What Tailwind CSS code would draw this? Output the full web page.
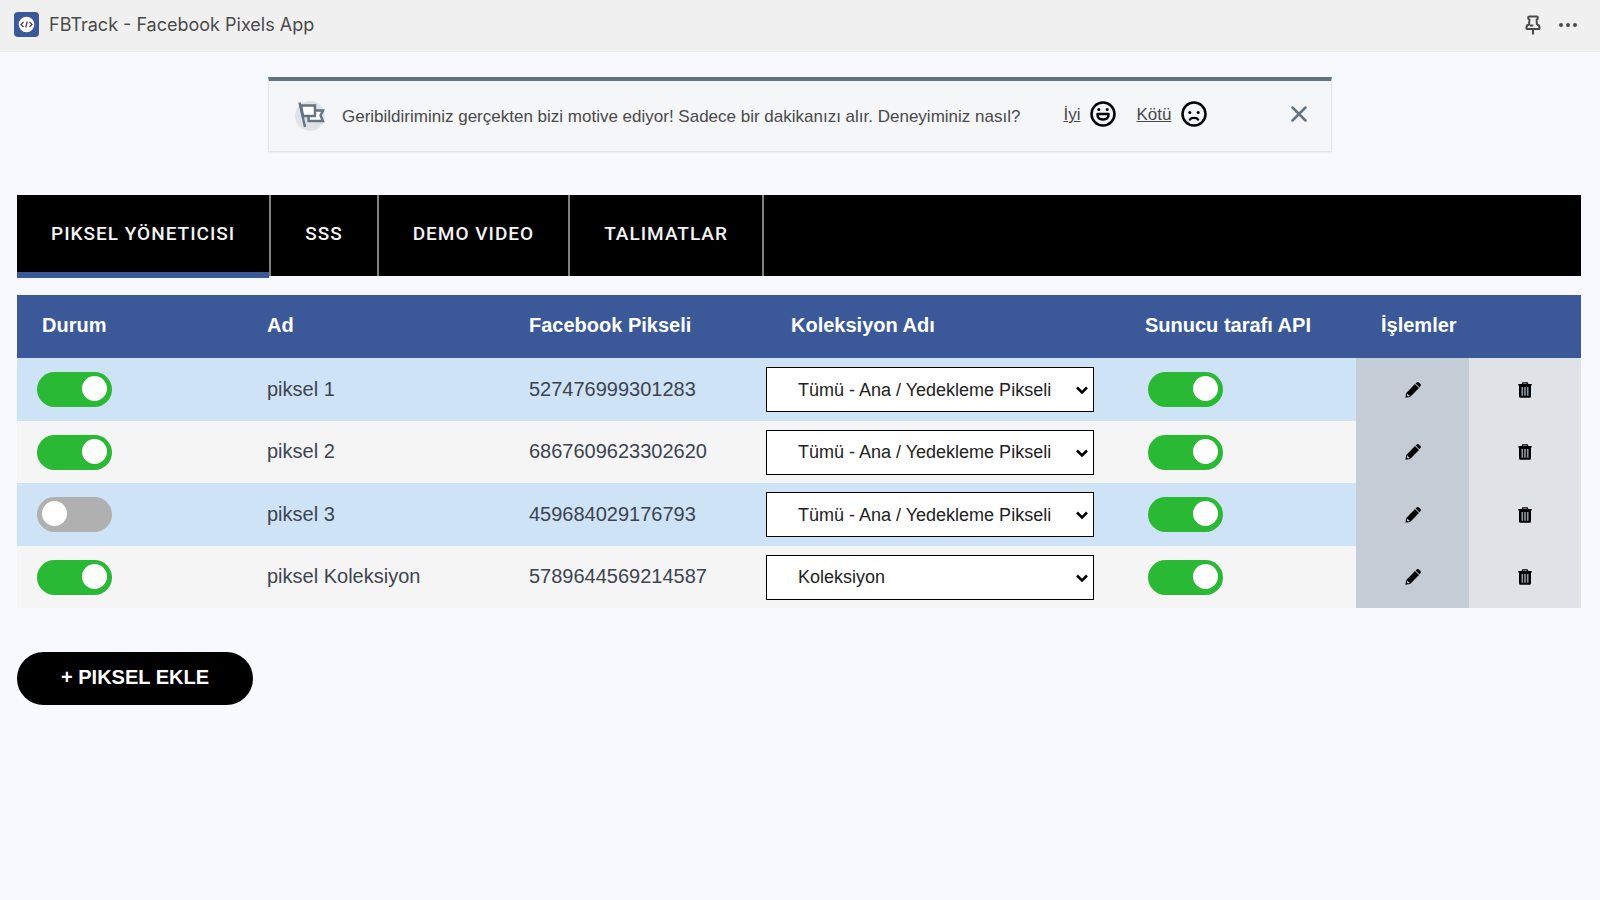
<!DOCTYPE html>
<html lang="tr">
<head>
<meta charset="utf-8">
<meta name="viewport" content="width=device-width, initial-scale=1">
<title>FBTrack - Facebook Pixels App</title>
<script src="https://cdn.jsdelivr.net/npm/@tailwindcss/browser@4"></script>
</head>
<body class="min-h-screen bg-[#f8f9ff] font-['Liberation_Sans',Arial,sans-serif] text-[#303030]">
<svg class="hidden" aria-hidden="true">
  <symbol id="pencil" viewBox="0 0 16 16"><path fill="currentColor" fill-rule="evenodd" d="M10.600 1.400 11.700.5a1.600 1.600 0 0 1 2.200 0l1.500 1.500a1.600 1.600 0 0 1 0 2.200l-1.100 1.100zM9.900 1.900l4.100 4.100-8.900 8.900-4.700.9.900-4.900zM2.300 11.800 1.900 13.400l1 1 1.500-.4v-1.100H3.200v-1.100z"/></symbol>
  <symbol id="trash" viewBox="0 0 14 16"><path fill="currentColor" fill-rule="evenodd" d="M3.800 2V1.400Q3.800.3 4.900.3h4.200q1.100 0 1.100 1.100V2h3.500v1.600H13v10.600q0 1.500-1.500 1.500h-9Q1 15.700 1 14.200V3.600H.3V2zm1.400 0h3.600v-.5H5.200z"/><path fill="#8d9aa5" d="M3.500 5h1.600v8.700H3.500zM6.200 5h1.600v8.700H6.200zM8.900 5h1.600v8.700H8.900z"/></symbol>
</svg>

<header class="flex h-[52px] items-center justify-between border-b border-[#ebebeb] bg-[#f0f0f0] pr-[22px] pl-3.5 pb-0.5">
  <div class="flex items-center gap-2.5">
    <svg class="size-[25px]" viewBox="0 0 25 25" aria-hidden="true"><rect width="25" height="25" rx="4" fill="#3b5998"/><circle cx="12.500" cy="12.500" r="7.800" fill="#fff"/><path d="M9.500 10 7 12.500 9.500 15M15.500 10l2.500 2.500-2.500 2.500M13.300 9.500l-1.600 6" fill="none" stroke="#444" stroke-width="1.300"/></svg>
    <h1 class="font-[Inter,sans-serif] text-[18px] leading-6 text-[#4a4a4a]">FBTrack - Facebook Pixels App</h1>
  </div>
  <div class="flex items-center gap-[17px] text-[#4a4a4a]">
    <button type="button" aria-label="Sabitle" class="block"><svg class="h-5 w-4" viewBox="0 0 16 20" fill="none" stroke="currentColor" stroke-width="2" stroke-linejoin="round" stroke-linecap="round"><path d="M4.200 1.500h7.600q1 0 1 1v.8q0 1-1.200 1.200l.3 4.800q2.600.9 2.600 3.200v.9q0 .6-.6.6H2.100q-.6 0-.6-.6v-.9q0-2.300 2.600-3.200l.3-4.800Q3.200 4.300 3.200 3.300v-.8q0-1 1-1zM8 14v4.700M5.500 10.500h2"/></svg></button>
    <button type="button" aria-label="Diğer" class="block"><svg class="h-5 w-5" viewBox="0 0 20 20" fill="currentColor"><circle cx="3" cy="10" r="2"/><circle cx="10" cy="10" r="2"/><circle cx="17" cy="10" r="2"/></svg></button>
  </div>
</header>

<section class="mx-auto mt-[25px] flex h-[75px] w-[1064px] max-w-full items-center border border-t-4 border-[#e4e6ea] border-t-[#637381] bg-[#f4f6f8] pr-6 pl-[26px] shadow-xs">
  <svg class="size-[30px] shrink-0" viewBox="0 0 30 30" aria-hidden="true"><circle cx="15" cy="15" r="15" fill="#dfe3e8"/><g stroke="#637381" stroke-width="2.400" fill="#fff"><path d="M12.500 9.500H28l-2.500 5L28 20H13.500v-5"/><path d="M6 4.500h14V15H8z"/><path d="M4.500 1.500 10 26" fill="none"/></g></svg>
  <p class="ml-[17px] pt-0.5 text-[17px] leading-6 text-[#4a4a4a]">Geribildiriminiz gerçekten bizi motive ediyor! Sadece bir dakikanızı alır. Deneyiminiz nasıl?</p>
  <a href="#iyi" class="ml-[43px] flex items-center gap-2.5 pb-1 text-[17px] leading-6 text-[#4a4a4a]"><span class="pt-0.5 underline">İyi</span>
    <svg class="size-[26px]" viewBox="0 0 26 26" aria-hidden="true"><circle cx="13" cy="13" r="11.500" fill="none" stroke="#000" stroke-width="2.500"/><circle cx="8.800" cy="8.500" r="1.500"/><circle cx="17.200" cy="8.500" r="1.500"/><path d="M7.500 13h11v.8q0 4.700-5.500 4.700t-5.500-4.700z" fill="none" stroke="#000" stroke-width="2.400" stroke-linejoin="round"/></svg></a>
  <a href="#kotu" class="ml-5 flex items-center gap-2.5 pb-1 text-[17px] leading-6 text-[#4a4a4a]"><span class="pt-0.5 underline">Kötü</span>
    <svg class="size-[26px]" viewBox="0 0 26 26" aria-hidden="true"><circle cx="13" cy="13" r="11.500" fill="none" stroke="#000" stroke-width="2.500"/><circle cx="8.800" cy="11.500" r="1.500"/><circle cx="17.200" cy="11.500" r="1.500"/><path d="M8.800 18.600q1-1.800 4.200-1.800t4.200 1.800" fill="none" stroke="#000" stroke-width="2.200" stroke-linecap="round"/></svg></a>
  <button type="button" aria-label="Kapat" class="ml-auto block pb-1 text-[#637381]"><svg class="size-4" viewBox="0 0 16 16" fill="none" stroke="currentColor" stroke-width="2.500" stroke-linecap="round"><path d="m1.500 1.500 13 13m0-13-13 13"/></svg></button>
</section>

<main class="mt-[43px] mr-[19px] ml-[17px]">
  <nav class="flex h-[81px] bg-black font-[Roboto,sans-serif] text-[19px] leading-6 font-medium tracking-[1px] text-[#f4f4f4]">
    <a href="#yonetici" class="box-content flex h-[77px] items-center border-b-6 border-[#3b5998] px-[34px]">PIKSEL YÖNETICISI</a>
    <a href="#sss" class="flex items-center border-x-2 border-[#808080] px-[34px] pb-1">SSS</a>
    <a href="#demo" class="flex items-center border-r-2 border-[#808080] px-[34px] pb-1">DEMO VIDEO</a>
    <a href="#talimatlar" class="flex items-center border-r-2 border-[#808080] px-[34px] pb-1">TALIMATLAR</a>
  </nav>

  <table class="mt-[19px] w-full table-fixed border-collapse text-left text-[20px] leading-6 text-[#3c4450]">
    <colgroup><col class="w-[225px]"><col class="w-[262px]"><col class="w-[262px]"><col class="w-[354px]"><col class="w-[236px]"><col class="w-[113px]"><col class="w-[112px]"></colgroup>
    <thead class="bg-[#3b5998] text-white">
      <tr class="h-[63px]">
        <th class="pb-1 pl-[25px]">Durum</th><th class="pb-1 pl-[25px]">Ad</th><th class="pb-1 pl-[25px]">Facebook Pikseli</th><th class="pb-1 pl-[25px]">Koleksiyon Adı</th><th class="pb-1 pl-[25px]">Sunucu tarafı API</th><th colspan="2" class="pb-1 pl-[25px]">İşlemler</th>
      </tr>
    </thead>
    <tbody id="rows"></tbody>
  </table>

  <button type="button" class="mt-11 h-[53px] rounded-full bg-black px-11 pb-1 text-[20px] leading-6 font-bold text-white">+ PIKSEL EKLE</button>
</main>

<script>
const all = 'Tümü - Ana / Yedekleme Pikseli';
const pixels = [
  ['piksel 1', '527476999301283', all, true],
  ['piksel 2', '6867609623302620', all, true],
  ['piksel 3', '459684029176793', all, false],
  ['piksel Koleksiyon', '5789644569214587', 'Koleksiyon', true],
];
const toggle = (label, on) => `<label class="relative block h-[35px] w-[75px]">
  <input type="checkbox" role="switch" aria-label="${label}" class="peer block h-[35px] w-[75px] appearance-none rounded-full bg-[#b0b0b0] checked:bg-[#2ab934]"${on ? ' checked' : ''}>
  <span class="absolute top-1 left-[5px] size-[25px] rounded-full bg-white peer-checked:left-[45px]"></span></label>`;
document.getElementById('rows').innerHTML = pixels.map(([name, id, col, on]) => `
<tr class="odd:h-[63px] even:h-[62px] odd:bg-[#cfe3f7] even:bg-[#f5f5f5]">
  <td class="pl-5">${toggle(name + ' durum', on)}</td>
  <td class="pb-0.5 pl-[25px]">${name}</td>
  <td class="pb-0.5 pl-[25px]">${id}</td>
  <td><div class="relative w-[328px]">
    <select aria-label="${name} koleksiyon adı" class="block h-[45px] w-full appearance-none border border-black bg-white pl-[31px] text-[18px] leading-6 text-[#222]">
      <option${col === all ? ' selected' : ''}>${all}</option><option${col !== all ? ' selected' : ''}>Koleksiyon</option>
    </select>
    <svg class="pointer-events-none absolute top-[19px] right-1.5 h-2 w-3" viewBox="0 0 12 8" fill="none" stroke="#000" stroke-width="2.500"><path d="m1 1.500 5 5 5-5"/></svg>
  </div></td>
  <td class="pl-7">${toggle(name + ' sunucu tarafı API', true)}</td>
  <td class="bg-[#c4cdd6]"><button type="button" aria-label="${name} düzenle" class="mx-auto block text-black"><svg class="size-4"><use href="#pencil"/></svg></button></td>
  <td class="bg-[#dfe3e8]"><button type="button" aria-label="${name} sil" class="mx-auto block text-black"><svg class="h-4 w-3.5"><use href="#trash"/></svg></button></td>
</tr>`).join('');
</script>
</body>
</html>
